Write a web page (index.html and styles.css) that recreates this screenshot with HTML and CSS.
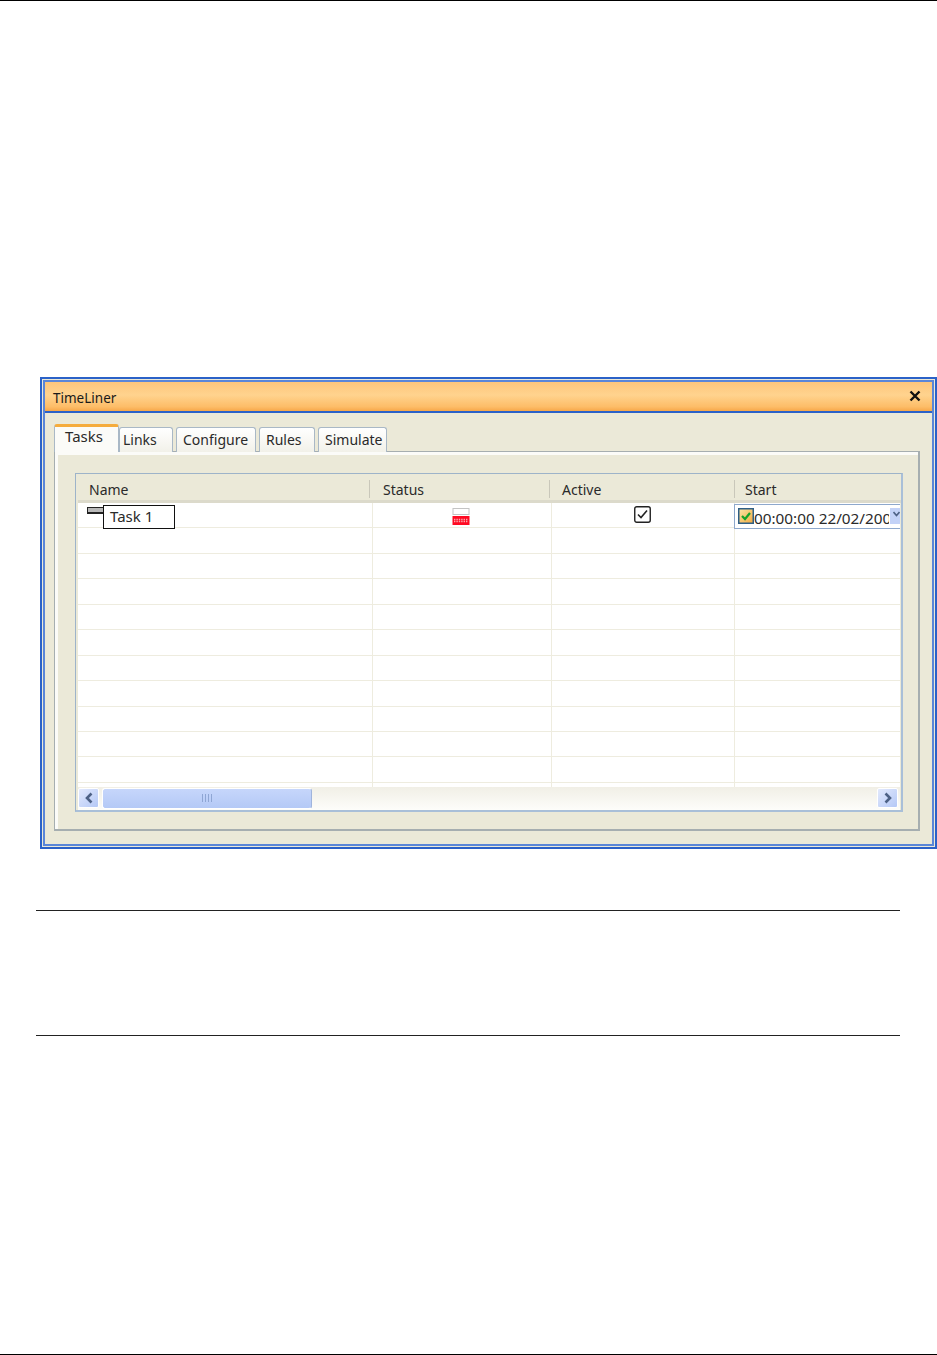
FILE: index.html
```html
<!DOCTYPE html>
<html lang="en">
<head>
    <meta charset="UTF-8">
    <meta name="viewport" content="width=device-width, initial-scale=1.0">
    <title>TimeLiner</title>
    <link rel="stylesheet" href="styles.css">
</head>
<body>

<div class="page">
    <div class="window">
        <div class="window-inner">
            <div class="titlebar">
                <span class="title">TimeLiner</span>
                <svg class="close" width="12" height="12" viewBox="0 0 12 12"><path d="M1.5 1.5 L10.5 10.5 M10.5 1.5 L1.5 10.5" stroke="#111" stroke-width="2.4" fill="none"/></svg>
            </div>
            <div class="content">
                <div class="tabs">
                    <div class="tab tab-active">Tasks</div>
                    <div class="tab tab-links">Links</div>
                    <div class="tab tab-configure">Configure</div>
                    <div class="tab tab-rules">Rules</div>
                    <div class="tab tab-simulate">Simulate</div>
                </div>
                <div class="panel">
                    <div class="grid">
                        <div class="grid-head">
                            <div class="head-cell head-name">Name</div>
                            <div class="head-cell head-status">Status</div>
                            <div class="head-cell head-active">Active</div>
                            <div class="head-cell head-start">Start</div>
                        </div>
                        <div class="grid-body">
                            <div class="row">
                                <div class="cell cell-name">
                                    <span class="task-icon"></span>
                                    <span class="task-edit">Task 1</span>
                                </div>
                                <div class="cell cell-status">
                                    <svg width="18" height="18" viewBox="0 0 18 18">
                                        <rect x="1" y="0.5" width="16" height="6" fill="#fff" stroke="#c4c4c4"/>
                                        <rect x="0.5" y="8" width="17" height="9" fill="#ff0a22"/>
                                        <path d="M2 11.5h14M2 13.5h14" stroke="#f9a8b0" stroke-width="1.4" stroke-dasharray="1.4 1"/>
                                    </svg>
                                </div>
                                <div class="cell cell-active">
                                    <svg width="17" height="17" viewBox="0 0 17 17">
                                        <rect x="0.75" y="0.75" width="15.5" height="15.5" rx="2" fill="#fff" stroke="#222" stroke-width="1.4"/>
                                        <path d="M4 8.5 L7 11.5 L13 4.5" fill="none" stroke="#222" stroke-width="1.6"/>
                                    </svg>
                                </div>
                                <div class="cell cell-start">
                                    <div class="date-edit">
                                        <svg class="date-check" width="16" height="16" viewBox="0 0 16 16">
                                            <defs>
                                                <linearGradient id="checkFill" x1="0" y1="0" x2="1" y2="1">
                                                    <stop offset="0" stop-color="#fbe7a8"/>
                                                    <stop offset="1" stop-color="#f2a93e"/>
                                                </linearGradient>
                                            </defs>
                                            <rect x="0.75" y="0.75" width="14.5" height="14.5" fill="url(#checkFill)" stroke="#2f5f86" stroke-width="1.5"/>
                                            <path d="M4 8 L7 11 L12 5" fill="none" stroke="#16a32a" stroke-width="2.2"/>
                                        </svg>
                                        <span class="date-text">00:00:00 22/02/2008</span>
                                        <span class="date-btn">
                                            <svg width="7" height="6" viewBox="0 0 7 6"><path d="M0.5 1 L3.5 4.5 L6.5 1" fill="none" stroke="#4d6185" stroke-width="1.6"/></svg>
                                        </span>
                                    </div>
                                </div>
                            </div>
                            <div class="row"><div class="cell cell-name"></div><div class="cell cell-status"></div><div class="cell cell-active"></div><div class="cell cell-start"></div></div>
                            <div class="row"><div class="cell cell-name"></div><div class="cell cell-status"></div><div class="cell cell-active"></div><div class="cell cell-start"></div></div>
                            <div class="row"><div class="cell cell-name"></div><div class="cell cell-status"></div><div class="cell cell-active"></div><div class="cell cell-start"></div></div>
                            <div class="row"><div class="cell cell-name"></div><div class="cell cell-status"></div><div class="cell cell-active"></div><div class="cell cell-start"></div></div>
                            <div class="row"><div class="cell cell-name"></div><div class="cell cell-status"></div><div class="cell cell-active"></div><div class="cell cell-start"></div></div>
                            <div class="row"><div class="cell cell-name"></div><div class="cell cell-status"></div><div class="cell cell-active"></div><div class="cell cell-start"></div></div>
                            <div class="row"><div class="cell cell-name"></div><div class="cell cell-status"></div><div class="cell cell-active"></div><div class="cell cell-start"></div></div>
                            <div class="row"><div class="cell cell-name"></div><div class="cell cell-status"></div><div class="cell cell-active"></div><div class="cell cell-start"></div></div>
                            <div class="row"><div class="cell cell-name"></div><div class="cell cell-status"></div><div class="cell cell-active"></div><div class="cell cell-start"></div></div>
                            <div class="row"><div class="cell cell-name"></div><div class="cell cell-status"></div><div class="cell cell-active"></div><div class="cell cell-start"></div></div>
                            <div class="row"><div class="cell cell-name"></div><div class="cell cell-status"></div><div class="cell cell-active"></div><div class="cell cell-start"></div></div>
                        </div>
                        <div class="scrollbar">
                            <div class="scroll-btn">
                                <svg width="10" height="12" viewBox="0 0 10 12"><path d="M7.5 1.5 L3 6 L7.5 10.5" fill="none" stroke="#4d6185" stroke-width="2.6"/></svg>
                            </div>
                            <div class="scroll-thumb">
                                <svg width="12" height="8" viewBox="0 0 12 8"><path d="M1.5 0v8M4.5 0v8M7.5 0v8M10.5 0v8" stroke="#8fa6d4" stroke-width="1"/></svg>
                            </div>
                            <div class="scroll-track"></div>
                            <div class="scroll-btn">
                                <svg width="10" height="12" viewBox="0 0 10 12"><path d="M2.5 1.5 L7 6 L2.5 10.5" fill="none" stroke="#4d6185" stroke-width="2.6"/></svg>
                            </div>
                        </div>
                    </div>
                </div>
            </div>
        </div>
    </div>

    <div class="note-box"></div>
</div>

</body>
</html>
```

FILE: styles.css
```css
* {
    box-sizing: border-box;
}
html, body {
    margin: 0;
    padding: 0;
    background-color: #fff;
}
body {
    font-family: "Noto Sans", "DejaVu Sans", sans-serif;
    font-size: 14px;
    color: #2a2a2a;
}
.page {
    width: 937px;
    height: 1355px;
    overflow: hidden;
    border-top: 1px solid #000;
    border-bottom: 1px solid #000;
    padding-top: 376px;
}

/* window frame */
.window {
    width: 897px;
    height: 472px;
    margin-left: 40px;
    border: 2px solid #2b62c8;
    background-color: #ebe9d8;
    padding: 1px;
}
.window-inner {
    height: 100%;
    border: 2px solid #5a86d8;
    display: flex;
    flex-direction: column;
    background-color: #ebe9d8;
}
.titlebar {
    height: 31px;
    flex: none;
    display: flex;
    align-items: center;
    justify-content: space-between;
    padding: 0 11px 0 8px;
    background: linear-gradient(to bottom, #fdc67c 0%, #ffd38e 45%, #fdbd68 85%, #f7a84a 100%);
    border-bottom: 2px solid #2b62c8;
}
.title {
    color: #1a1a1a;
    font-size: 13.5px;
    padding-top: 2px;
}
.close {
    margin-bottom: 2px;
}
.content {
    flex: 1;
    padding: 10px 12px 0 9px;
}

/* tabs */
.tabs {
    display: flex;
    align-items: flex-end;
    height: 29px;
}
.tab {
    height: 25px;
    border: 1px solid #a9b8c6;
    border-bottom: 0;
    border-radius: 3px 3px 0 0;
    background: linear-gradient(to bottom, #fff, #f2f1e9);
    padding-left: 6px;
    line-height: 24px;
    margin-right: 3px;
}
.tab-active {
    width: 65px;
    height: 28px;
    margin-right: 0;
    border-top: 3px solid #f5ac3c;
    background: #fbfbf8;
    font-size: 15px;
    line-height: 19px;
    padding-left: 10px;
    position: relative;
    z-index: 1;
}
.tab-links {
    width: 54px;
    padding-left: 3px;
}
.tab-configure {
    width: 80px;
}
.tab-rules {
    width: 56px;
}
.tab-simulate {
    width: 69px;
}
.panel {
    width: 866px;
    height: 380px;
    margin-top: -1px;
    border: 1px solid #a6aeb0;
    border-right: 2px solid #a6aeb0;
    border-bottom: 2px solid #a6aeb0;
    box-shadow: inset 3px 3px 0 #fbfbf8;
    padding: 21px 0 0 20px;
}

/* grid */
.grid {
    width: 828px;
    height: 339px;
    border: 1px solid #9db3c9;
    border-right: 2px solid #a9bfd8;
    border-bottom: 2px solid #a9bfd8;
    padding: 2px 0 0 2px;
    display: flex;
    flex-direction: column;
    background-color: #ebe9d8;
}
.grid-head {
    height: 27px;
    flex: none;
    display: grid;
    grid-template-columns: 295px 179px 183px 1fr;
    border-bottom: 3px solid #dcdacb;
    align-items: start;
}
.head-cell {
    height: 18px;
    line-height: 19px;
    margin-top: 4px;
    border-right: 1px solid #c9c7ba;
}
.head-name {
    padding-left: 11px;
    width: 292px;
}
.head-status {
    padding-left: 13px;
    margin-left: -3px;
    width: 180px;
}
.head-active {
    padding-left: 12px;
    margin-left: -2px;
}
.head-start {
    padding-left: 12px;
    margin-left: -2px;
    border-right: 0;
}
.grid-body {
    height: 284px;
    flex: none;
    background-color: #fff;
    overflow: hidden;
    margin-right: 1px;
}
.row {
    height: 25.45px;
    display: grid;
    grid-template-columns: 295px 179px 183px 1fr;
    border-bottom: 1px solid #eeecdf;
}
.cell {
    border-right: 1px solid #eeecdf;
    display: flex;
    position: relative;
}
.cell-start {
    border-right: 0;
}
.cell-name {
    padding: 4px 0 0 9px;
    align-items: flex-start;
}
.task-icon {
    width: 18px;
    height: 7px;
    border: 1px solid #222;
    border-width: 1px 1px 2px 1px;
    background-color: #b9b9b9;
    margin-top: 0;
}
.task-edit {
    width: 72px;
    height: 24px;
    margin: -2px 0 0 -2px;
    border: 1px solid #111;
    background-color: #fff;
    padding-left: 6px;
    line-height: 21px;
    font-size: 15px;
    position: relative;
    z-index: 1;
    flex: none;
}
.cell-status {
    padding: 5px 0 0 79px;
}
.cell-active {
    padding: 3px 0 0 82px;
}
.cell-start {
    padding-top: 1px;
}
.date-edit {
    width: 168px;
    height: 25px;
    margin-left: -1px;
    border: 1px solid #8ea8cc;
    background-color: #fff;
    display: flex;
    align-items: flex-start;
    padding: 3px 0 0 3px;
    position: relative;
    z-index: 1;
    overflow: hidden;
}
.date-check {
    flex: none;
}
.date-text {
    width: 135px;
    flex: none;
    overflow: hidden;
    white-space: nowrap;
    padding-left: 0;
    font-size: 15.3px;
    line-height: 21px;
}
.date-btn {
    flex: none;
    width: 12px;
    height: 16px;
    margin-left: 1px;
    background-color: #c3d2f7;
    display: flex;
    justify-content: center;
    padding-top: 3px;
}

/* scrollbar */
.scrollbar {
    flex: 1;
    display: flex;
    align-items: center;
    padding: 0 2px 1px 0;
    margin-right: 1px;
    background: linear-gradient(to bottom, #f1efe6, #fdfdfa);
}
.scroll-btn {
    width: 21px;
    height: 20px;
    border: 1px solid #fff;
    border-radius: 2px;
    background: linear-gradient(to bottom right, #e2e9fd, #b4c8f6);
    display: flex;
    align-items: center;
    justify-content: center;
    flex: none;
}
.scroll-thumb {
    width: 210px;
    height: 21px;
    margin-left: 3px;
    border: 1px solid #fff;
    border-right: 1px solid #9fb4dc;
    border-radius: 3px;
    background: linear-gradient(to bottom, #c6d6fb, #b4c9f6);
    display: flex;
    align-items: center;
    justify-content: center;
    flex: none;
}
.scroll-track {
    flex: 1;
}

/* empty ruled box under the window */
.note-box {
    width: 864px;
    height: 126px;
    margin: 61px 0 0 36px;
    border-top: 1px solid #222;
    border-bottom: 1px solid #222;
}
```
